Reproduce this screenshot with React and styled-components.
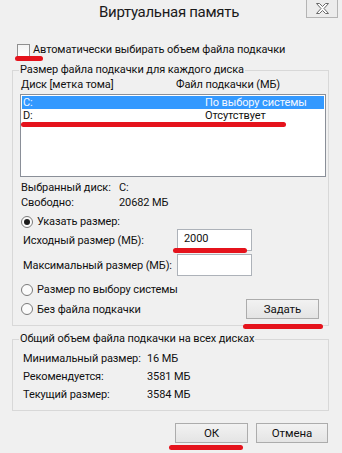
import React from "react";
import styled, { createGlobalStyle } from "styled-components";

const Global = createGlobalStyle`
  html, body { margin: 0; padding: 0; background: #f0f0f0; }
  body {
    font-family: Roboto, "Liberation Sans", sans-serif;
    font-size: 11px;
    letter-spacing: -0.1px;
    color: #111;
    white-space: nowrap;
  }
`;

const Window = styled.div`
  width: 342px;
  height: 453px;
  background: #f0f0f0;
  overflow: hidden;
  display: flex;
  flex-direction: column;
`;

const TitleBar = styled.div`
  display: grid;
  grid-template-columns: 1fr auto 1fr;
  align-items: start;
  height: 42px;
  padding-right: 4px;
`;

const Title = styled.div`
  grid-column: 2;
  font-size: 15px;
  letter-spacing: -0.3px;
  line-height: 20px;
  padding-top: 2px;
  color: #1a1a1a;
`;

const CloseButton = styled.div`
  grid-column: 3;
  justify-self: end;
  margin-top: -1px;
  width: 32px;
  height: 19px;
  box-sizing: border-box;
  border: 1px solid #b4b4b4;
  background: #ececec;
  display: flex;
  align-items: center;
  justify-content: center;
`;

const Mark = styled.div`
  position: absolute;
  height: 5px;
  border-radius: 3px;
  background: #e5131c;
  left: ${(p) => p.$left}px;
  top: ${(p) => p.$top}px;
  width: ${(p) => p.$width}px;
`;

const CheckRow = styled.div`
  position: relative;
  display: flex;
  align-items: center;
  gap: 3px;
  height: 16px;
  line-height: 16px;
  padding-left: 17px;
`;

const CheckBox = styled.span`
  width: 13px;
  height: 13px;
  box-sizing: border-box;
  border: 1px solid #8f8f8f;
  background: linear-gradient(#f4f4f4, #ffffff);
`;

const Group = styled.fieldset`
  margin: ${(p) => p.$mt}px 13px 0 12px;
  padding: 0 2px ${(p) => p.$pb}px 7px;
  border: 1px solid #d8d8d8;
  min-width: 0;
`;

const Legend = styled.legend`
  padding: 0 1px;
  margin-left: -1px;
  line-height: 14px;
`;

const HeaderRow = styled.div`
  display: grid;
  grid-template-columns: 155px 1fr;
  padding-left: 1px;
  line-height: 16px;
`;

const ListBox = styled.div`
  position: relative;
  margin-top: 1px;
  height: 80px;
  border: 1px solid #8a8f98;
  background: #fff;
  padding-top: 1px;
  box-sizing: content-box;
`;

const ListRow = styled.div`
  display: grid;
  grid-template-columns: 182px 1fr;
  margin: 0 1px;
  padding-left: 1px;
  height: 13px;
  line-height: 13px;
  background: ${(p) => (p.$selected ? "#3399ff" : "transparent")};
  color: ${(p) => (p.$selected ? "#f4f8ff" : "#111")};
`;

const InfoGrid = styled.div`
  display: grid;
  grid-template-columns: ${(p) => p.$label}px 1fr;
  padding-left: ${(p) => p.$pad}px;
  margin-top: ${(p) => p.$mt}px;
  line-height: ${(p) => p.$lh}px;
`;

const RadioRow = styled.div`
  display: flex;
  align-items: center;
  gap: 4px;
  padding-left: 1px;
  line-height: 15px;
  margin-top: ${(p) => p.$mt || 0}px;
`;

const Radio = styled.span`
  width: 12px;
  height: 12px;
  box-sizing: border-box;
  border-radius: 50%;
  border: 1px solid #7a7a7a;
  background: #fbfbfb;
  display: flex;
  align-items: center;
  justify-content: center;
  &::after {
    content: "";
    width: 6px;
    height: 6px;
    border-radius: 50%;
    background: ${(p) => (p.$checked ? "#1b1b1b" : "transparent")};
  }
`;

const SizeRow = styled.div`
  position: relative;
  display: grid;
  grid-template-columns: 154px 75px;
  align-items: center;
  padding-left: 3px;
  margin-top: ${(p) => p.$mt || 0}px;
`;

const Field = styled.div`
  height: 22px;
  box-sizing: border-box;
  border: 1px solid #adb2b9;
  background: #fff;
  padding-left: 6px;
  padding-top: 1px;
  line-height: 16px;
`;

const ActionRow = styled.div`
  position: relative;
  display: flex;
  align-items: center;
  justify-content: space-between;
  margin-top: 2px;
  padding-right: 7px;
`;

const Button = styled.button`
  width: ${(p) => p.$width}px;
  height: 20px;
  padding: 0;
  border: 1px solid #acacac;
  background: linear-gradient(#f2f2f2, #e4e4e4);
  font-family: inherit;
  font-size: 11.5px;
  letter-spacing: -0.1px;
  color: #111;
`;

const Footer = styled.div`
  position: relative;
  display: flex;
  justify-content: flex-end;
  gap: 8px;
  margin-top: 12px;
  padding-right: 14px;
`;

export default function App() {
  return (
    <>
      <Global />
      <Window>
        <TitleBar>
          <Title>Виртуальная память</Title>
          <CloseButton>
            <svg width="13" height="11" viewBox="-0.5 -0.5 13 11">
              <polygon
                points="0,0 3,0 6,3 9,0 12,0 7.5,5 12,10 9,10 6,7 3,10 0,10 4.5,5"
                fill="#fdfdfd"
                stroke="#6a6a6a"
                strokeWidth="1"
                strokeLinejoin="round"
              />
            </svg>
          </CloseButton>
        </TitleBar>

        <CheckRow>
          <CheckBox />
          <span>Автоматически выбирать объем файла подкачки</span>
          <Mark $left={15} $top={14} $width={28} />
        </CheckRow>

        <Group $mt={5} $pb={6}>
          <Legend>Размер файла подкачки для каждого диска</Legend>
          <HeaderRow>
            <span>Диск [метка тома]</span>
            <span>Файл подкачки (МБ)</span>
          </HeaderRow>
          <ListBox>
            <ListRow $selected>
              <span>C:</span>
              <span>По выбору системы</span>
            </ListRow>
            <ListRow>
              <span>D:</span>
              <span>Отсутствует</span>
            </ListRow>
            <Mark $left={0} $top={27} $width={265} />
          </ListBox>

          <InfoGrid $label={98} $pad={1} $mt={3} $lh={15}>
            <span>Выбранный диск:</span>
            <span>C:</span>
            <span>Свободно:</span>
            <span>20682 МБ</span>
          </InfoGrid>

          <RadioRow $mt={4}>
            <Radio $checked />
            <span>Указать размер:</span>
          </RadioRow>

          <SizeRow>
            <span>Исходный размер (МБ):</span>
            <Field>2000</Field>
            <Mark $left={153} $top={19} $width={74} />
          </SizeRow>
          <SizeRow $mt={3}>
            <span>Максимальный размер (МБ):</span>
            <Field />
          </SizeRow>

          <RadioRow $mt={6}>
            <Radio />
            <span>Размер по выбору системы</span>
          </RadioRow>
          <ActionRow>
            <RadioRow>
              <Radio />
              <span>Без файла подкачки</span>
            </RadioRow>
            <Button $width={73}>Задать</Button>
            <Mark $left={223} $top={25} $width={80} />
          </ActionRow>
        </Group>

        <Group $mt={6} $pb={6}>
          <Legend>Общий объем файла подкачки на всех дисках</Legend>
          <InfoGrid $label={124} $pad={3} $mt={4} $lh={18}>
            <span>Минимальный размер:</span>
            <span>16 МБ</span>
            <span>Рекомендуется:</span>
            <span>3581 МБ</span>
            <span>Текущий размер:</span>
            <span>3584 МБ</span>
          </InfoGrid>
        </Group>

        <Footer>
          <Button $width={73}>ОК</Button>
          <Button $width={72}>Отмена</Button>
          <Mark $left={169} $top={22} $width={74} />
        </Footer>
      </Window>
    </>
  );
}
